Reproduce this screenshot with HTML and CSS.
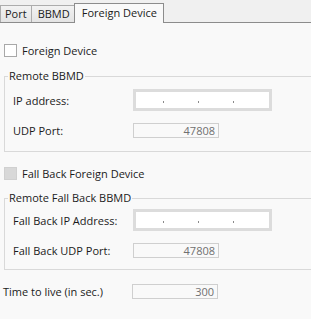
FILE: index.html
```html
<!DOCTYPE html>
<html>
<head>
<meta charset="utf-8">
<link rel="stylesheet" href="styles.css">
</head>
<body>
<div class="tabstrip">
  <div class="tab tab-first">Port</div>
  <div class="tab">BBMD</div>
  <div class="tab tab-active">Foreign Device</div>
</div>
<div class="panel">
  <label class="check check-1"><span class="box"></span><span>Foreign Device</span></label>

  <div class="group group-1">
    <div class="legend">Remote BBMD</div>
    <div class="row row-ip row-ip-1">
      <span class="lbl">IP address:</span>
      <div class="ipbox"><i class="dot"></i><i class="dot"></i><i class="dot"></i></div>
    </div>
    <div class="row row-port">
      <span class="lbl">UDP Port:</span>
      <div class="numbox">47808</div>
    </div>
  </div>

  <label class="check check-2"><span class="box box-disabled"></span><span>Fall Back Foreign Device</span></label>

  <div class="group group-2">
    <div class="legend">Remote Fall Back BBMD</div>
    <div class="row row-ip row-ip-2">
      <span class="lbl">Fall Back IP Address:</span>
      <div class="ipbox"><i class="dot"></i><i class="dot"></i><i class="dot"></i></div>
    </div>
    <div class="row row-port">
      <span class="lbl">Fall Back UDP Port:</span>
      <div class="numbox">47808</div>
    </div>
  </div>

  <div class="row row-ttl">
    <span class="lbl">Time to live (in sec.)</span>
    <div class="numbox">300</div>
  </div>
</div>
</body>
</html>
```
FILE: styles.css
```css
html, body {
  margin: 0;
  padding: 0;
}
body {
  width: 311px;
  height: 319px;
  overflow: hidden;
  background: #f9f9f9;
  font-family: "Open Sans", "Noto Sans", sans-serif;
  font-size: 11px;
  color: #1b1b1b;
}
.tabstrip {
  height: 22px;
  background: #f0f0f0;
  border-bottom: 1px solid #8c8c8c;
  display: flex;
  align-items: flex-end;
}
.tab {
  height: 16px;
  line-height: 15px;
  border: 1px solid #acacac;
  border-bottom: none;
  background: linear-gradient(#f2f2f2, #e4e4e4);
  padding: 0 4px 0 6px;
  margin-left: -1px;
  box-sizing: content-box;
}
.tab-first {
  margin-left: 0;
  padding: 0 4px 0 4px;
}
.tab-active {
  height: 19px;
  line-height: 17px;
  margin-bottom: -1px;
  background: #f9f9f9;
  border-color: #8c8c8c;
  padding: 0 6px 0 7px;
}
.panel {
  display: flex;
  flex-direction: column;
}
.check {
  display: flex;
  align-items: center;
  height: 16px;
  margin-left: 4px;
  gap: 5px;
}
.check-1 { margin-top: 19px; }
.check-2 { margin-top: 13px; }
.box {
  width: 11px;
  height: 11px;
  border: 1px solid #a8a8a8;
  background: #fff;
}
.box-disabled {
  background: #d8d8d8;
  border-color: #d0d0d0;
}
.group {
  margin-left: 4px;
  border: 1px solid #d9d9d9;
  border-right: none;
  display: flex;
  flex-direction: column;
}
.group-1 { margin-top: 18px; padding-bottom: 13px; }
.group-2 { margin-top: 17px; padding-bottom: 11px; }
.legend {
  margin-top: -8px;
  margin-left: 3px;
  padding: 0 1px;
  height: 14px;
  line-height: 14px;
  width: fit-content;
  background: #f9f9f9;
}
.row {
  display: grid;
  grid-template-columns: 128px auto;
  justify-content: start;
  align-items: center;
}
.lbl {
  padding-left: 8px;
}
.row-ip-1 { margin-top: 6px; }
.row-ip-2 { margin-top: 4px; }
.row-port { margin-top: 12px; }
.ipbox {
  height: 16px;
  border: 3px solid #dcdcdc;
  background: #fff;
  display: flex;
  align-items: flex-end;
  padding-left: 27px;
  gap: 34px;
  box-sizing: content-box;
  width: 106px;
}
.dot {
  display: block;
  width: 1px;
  height: 2px;
  margin-bottom: 5px;
  background: #8a8a8a;
}
.numbox {
  line-height: 13px;
  border: 1px solid #cfcfcf;
  text-align: right;
  padding-right: 3px;
  box-sizing: border-box;
  width: 86px;
  height: 15px;
  color: #707070;
}
.row-ttl {
  margin-top: 14px;
  grid-template-columns: 132px auto;
}
.row-ttl .lbl {
  padding-left: 3px;
}
```
